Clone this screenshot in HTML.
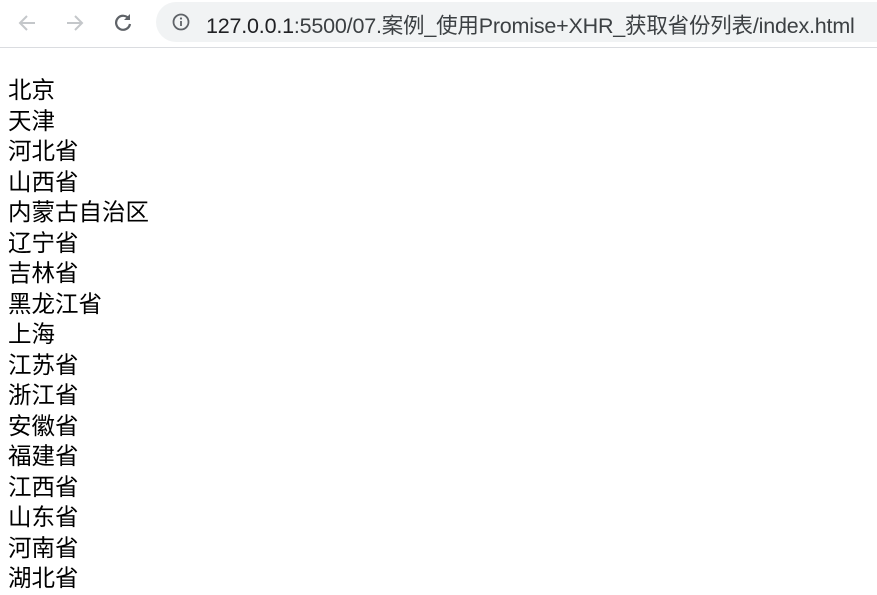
<!DOCTYPE html>
<html><head><meta charset="utf-8"><style>
body{margin:0;width:877px;height:595px;overflow:hidden;background:#fff;font-family:"Liberation Sans","Noto Sans CJK SC",sans-serif;}
.bar{position:absolute;left:0;top:0;width:877px;height:47px;border-bottom:1px solid #dadce0;background:#fff}
.url{position:absolute;left:156px;top:2px;width:740px;height:40px;border-radius:20px;background:#f1f3f4}
.url span{position:absolute;left:50px;top:7px;font-size:21.5px;color:#202124;white-space:nowrap;letter-spacing:-0.2px}
.list{position:absolute;left:8px;top:75px;font-size:23.5px;line-height:30.5px;color:#000}
</style></head><body>
<div class="bar">
<svg style="position:absolute;left:16px;top:12px" width="22" height="22" viewBox="0 0 22 22"><path d="M19 11H4M11 4L4 11l7 7" stroke="#c4c7ca" stroke-width="2" fill="none"/></svg>
<svg style="position:absolute;left:64px;top:12px" width="22" height="22" viewBox="0 0 22 22"><path d="M3 11h15M11 4l7 7-7 7" stroke="#c4c7ca" stroke-width="2" fill="none"/></svg>
<svg style="position:absolute;left:112px;top:11px" width="22" height="22" viewBox="0 0 22 22"><path d="M17 8A7 7 0 1 0 18 13" stroke="#5f6368" stroke-width="2.2" fill="none"/><path d="M18 3v6h-6z" fill="#5f6368"/></svg>
<div class="url">
<svg style="position:absolute;left:16px;top:11px" width="18" height="18" viewBox="0 0 18 18"><circle cx="9" cy="9" r="7.5" stroke="#5f6368" stroke-width="1.8" fill="none"/><path d="M9 8v5" stroke="#5f6368" stroke-width="1.8"/><circle cx="9" cy="5.5" r="1.1" fill="#5f6368"/></svg>
<span>127.0.0.1<span style="position:static;color:#3c4043">:5500/07.案例_使用Promise+XHR_获取省份列表/index.html</span></span>
</div>
</div>
<div class="list">北京<br>天津<br>河北省<br>山西省<br>内蒙古自治区<br>辽宁省<br>吉林省<br>黑龙江省<br>上海<br>江苏省<br>浙江省<br>安徽省<br>福建省<br>江西省<br>山东省<br>河南省<br>湖北省</div>
</body></html>
